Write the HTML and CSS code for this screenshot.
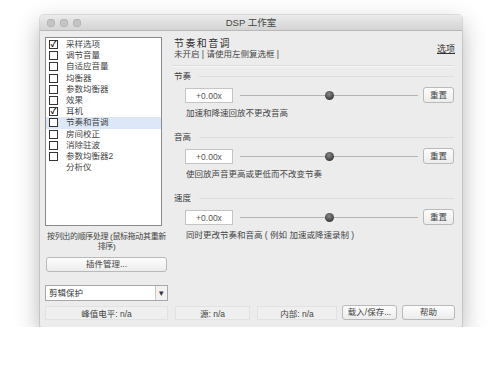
FILE: index.html
```html
<!doctype html>
<html>
<head>
<meta charset="UTF-8" />
<title>DSP 工作室</title>
<link rel="stylesheet" href="styles.css">
</head>
<body>
	<div class="window">
		<div class="titlebar">
			<div class="lights"><span></span><span></span><span></span></div>
			<div class="title">DSP 工作室</div>
		</div>
		<div class="content">
			<div class="sidebar">
				<ul class="plugin-list">
					<li><span class="check on">✓</span>采样选项</li>
					<li><span class="check"></span>调节音量</li>
					<li><span class="check"></span>自适应音量</li>
					<li><span class="check"></span>均衡器</li>
					<li><span class="check"></span>参数均衡器</li>
					<li><span class="check"></span>效果</li>
					<li><span class="check on">✓</span>耳机</li>
					<li class="selected"><span class="check"></span>节奏和音调</li>
					<li><span class="check"></span>房间校正</li>
					<li><span class="check"></span>消除驻波</li>
					<li><span class="check"></span>参数均衡器2</li>
					<li><span class="check none"></span>分析仪</li>
				</ul>
				<div class="hint">按列出的顺序处理 (鼠标拖动其重新<br>排序)</div>
				<div class="btn wide">插件管理...</div>
				<div class="select"><span class="select-text">剪辑保护</span><span class="select-arrow">▾</span></div>
			</div>
			<div class="main">
				<div class="head">
					<div>
						<div class="head-title">节奏和音调</div>
						<div class="head-sub">未开启 | 请使用左侧复选框 |</div>
					</div>
					<a href="#" class="options">选项</a>
				</div>
				<div class="sep"></div>

				<div class="group">
					<div class="group-label">节奏</div>
					<div class="row">
						<div class="value">+0.00x</div>
						<div class="track"><span class="knob"></span></div>
						<div class="btn reset">重置</div>
					</div>
					<div class="desc">加速和降速回放不更改音高</div>
				</div>

				<div class="group">
					<div class="group-label">音高</div>
					<div class="row">
						<div class="value">+0.00x</div>
						<div class="track"><span class="knob"></span></div>
						<div class="btn reset">重置</div>
					</div>
					<div class="desc">使回放声音更高或更低而不改变节奏</div>
				</div>

				<div class="group">
					<div class="group-label">速度</div>
					<div class="row">
						<div class="value">+0.00x</div>
						<div class="track"><span class="knob"></span></div>
						<div class="btn reset">重置</div>
					</div>
					<div class="desc">同时更改节奏和音高 ( 例如 加速或降速录制 )</div>
				</div>
			</div>
		</div>
		<div class="status">
			<div class="cell peak">峰值电平: n/a</div>
			<div class="cell src">源: n/a</div>
			<div class="cell inner">内部: n/a</div>
			<div class="btn load">载入/保存...</div>
			<div class="btn help">帮助</div>
		</div>
	</div>
</body>
</html>
```

FILE: styles.css
```css
html, body, div, ul, li, a, span{
	margin:0;
	padding:0;
}
body{
	background:#fff;
	font-family:"Liberation Sans", "Noto Sans CJK SC", sans-serif;
	font-size:8.5px;
	color:#3a3a3a;
}
.window{
	margin:15px 0 0 40px;
	width:422px;
	height:312px;
	background:#ececec;
	border-radius:4px 4px 2px 2px;
	box-shadow:0 0 0 1px rgba(0,0,0,0.1), 0 9px 24px rgba(0,0,0,0.3);
	display:flex;
	flex-direction:column;
	overflow:hidden;
}
.titlebar{
	flex-shrink:0;
	height:15px;
	background:linear-gradient(#ebebeb, #d4d4d4);
	border-bottom:1px solid #b8b8b8;
	display:flex;
	align-items:center;
	position:relative;
}
.lights{
	display:flex;
	gap:5px;
	margin-left:7px;
}
.lights span{
	width:8px;
	height:8px;
	border-radius:50%;
	background:#c4c4c4;
	box-shadow:inset 0 0 0 0.5px #a8a8a8;
}
.title{
	position:absolute;
	left:0;
	right:0;
	text-align:center;
	font-size:9.5px;
	color:#444;
	line-height:15px;
}
.content{
	flex:1;
	min-height:0;
	display:flex;
	padding:6px 6px 0 5px;
}
.sidebar{
	width:123px;
	display:flex;
	flex-direction:column;
}
.plugin-list{
	list-style:none;
	width:115px;
	height:186px;
	padding-top:1px;
	background:#fff;
	border:1px solid #8a8a8a;
}
.plugin-list li{
	height:11.2px;
	line-height:11.2px;
	display:flex;
	align-items:center;
	padding-left:3px;
	font-size:8.5px;
	color:#444;
}
.plugin-list li.selected{
	background:#dce8f7;
}
.check{
	width:7px;
	height:7px;
	border:1px solid #333;
	background:#fff;
	margin-right:8px;
	font-size:8px;
	line-height:7px;
	text-align:center;
	color:#111;
	font-weight:bold;
}
.check.none{
	border-color:transparent;
	background:transparent;
}
.hint{
	margin-top:6px;
	text-align:center;
	font-size:8px;
	line-height:10px;
	letter-spacing:-0.35px;
	white-space:nowrap;
	color:#444;
}
.btn{
	background:linear-gradient(#fdfdfd, #ececec);
	border:1px solid #b9b9b9;
	border-radius:3px;
	text-align:center;
	color:#444;
	box-sizing:border-box;
}
.btn.wide{
	margin:5px 0 0 1px;
	width:121px;
	height:15px;
	line-height:13px;
}
.select{
	margin-top:13px;
	height:16px;
	display:flex;
	background:#fff;
	border:1px solid #a8a8a8;
	box-sizing:border-box;
}
.select-text{
	flex:1;
	padding-left:3px;
	line-height:14px;
}
.select-arrow{
	width:11px;
	border-left:1px solid #c8c8c8;
	background:#f2f2f2;
	text-align:center;
	line-height:14px;
	font-size:9px;
	color:#333;
}
.main{
	flex:1;
	margin-left:4px;
	padding-right:2px;
}
.head{
	display:flex;
	justify-content:space-between;
	align-items:flex-start;
	padding-left:2px;
}
.head-title{
	font-size:10px;
	letter-spacing:1.4px;
	line-height:11px;
	margin-top:1px;
	color:#333;
}
.head-sub{
	line-height:11px;
	color:#444;
}
.options{
	color:#333;
	font-size:9px;
	margin-top:5px;
	margin-right:-1px;
}
.sep{
	margin-top:5px;
	height:1px;
	background:#dcdcdc;
	border-bottom:1px solid #f6f6f6;
}
.group{
	margin-top:4px;
	margin-bottom:14px;
}
.group-label{
	display:flex;
	align-items:center;
	line-height:10px;
	padding-left:2px;
}
.group-label::after{
	content:"";
	flex:1;
	height:1px;
	margin-left:8px;
	background:#dedede;
}
.row{
	display:flex;
	align-items:center;
	margin-top:6px;
	padding-left:13px;
	height:16px;
}
.value{
	width:48px;
	height:15px;
	line-height:15px;
	box-sizing:border-box;
	background:#fff;
	border:1px solid #c4c4c4;
	text-align:center;
	font-size:8.5px;
	color:#555;
}
.track{
	flex:1;
	height:1px;
	margin:0 5px 0 7px;
	background:#b4b4b4;
	position:relative;
}
.knob{
	position:absolute;
	left:47.5%;
	top:-4px;
	width:9px;
	height:9px;
	border-radius:50%;
	background:radial-gradient(circle at 45% 35%, #888, #3e3e3e 70%);
}
.btn.reset{
	width:31px;
	height:16px;
	line-height:14px;
}
.desc{
	margin-top:5px;
	padding-left:14px;
	line-height:10px;
	color:#444;
}
.status{
	flex-shrink:0;
	display:flex;
	align-items:center;
	padding:0 0 7px 5px;
	height:15px;
}
.cell{
	height:14px;
	line-height:14px;
	text-align:center;
	background:#efefef;
	border:1px solid #e2e2e2;
	box-sizing:border-box;
	color:#444;
}
.cell.peak{
	width:123px;
}
.cell.src{
	width:75px;
	margin-left:7px;
}
.cell.inner{
	width:80px;
	margin-left:7px;
}
.btn.load{
	width:55px;
	height:15px;
	line-height:13px;
	margin-left:5px;
}
.btn.help{
	width:53px;
	height:15px;
	line-height:13px;
	margin-left:5px;
}
```
